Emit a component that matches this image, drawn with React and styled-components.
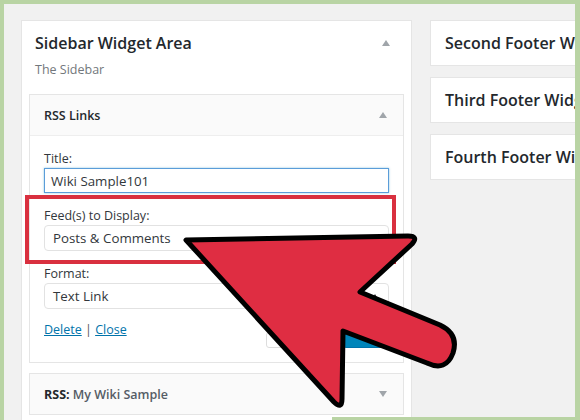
import React from 'react';
import styled, { createGlobalStyle } from 'styled-components';

const Global = createGlobalStyle`
  html, body { margin: 0; padding: 0; }
  body { font-family: "Open Sans", "Liberation Sans", sans-serif; color: #23282d; }
  * { box-sizing: border-box; }
`;

const Frame = styled.div`
  position: relative;
  width: 580px;
  height: 420px;
  padding: 4px 5px 0 4px;
  background: #b9d4a4;
  overflow: hidden;
`;

const Canvas = styled.div`
  display: flex;
  align-items: flex-start;
  gap: 18px;
  height: 100%;
  padding: 16px 0 0 17px;
  background: #f1f1f1;
  overflow: hidden;
`;

const Area = styled.div`
  flex: none;
  width: 391px;
  height: 420px;
  background: #fff;
  border: 1px solid #e5e5e5;
  padding: 0 7px;
`;

const AreaHead = styled.div`
  display: flex;
  align-items: center;
  justify-content: space-between;
  padding: 11px 14px 0 6px;
`;

const AreaTitle = styled.h2`
  margin: 0;
  font-size: 16px;
  line-height: 22px;
  font-weight: 600;
  color: #23282d;
`;

const AreaDesc = styled.div`
  margin: 7px 0 15px 6px;
  font-size: 12.5px;
  line-height: 18px;
  color: #72777c;
`;

const Toggle = styled.span`
  width: 0;
  height: 0;
  border-left: 4.5px solid transparent;
  border-right: 4.5px solid transparent;
  ${p => p.down
    ? 'border-top: 6px solid #a0a5aa;'
    : 'border-bottom: 6px solid #a0a5aa;'}
`;

const Widget = styled.div`
  border: 1px solid #e5e5e5;
  background: #fff;
  & + & { margin-top: 10px; }
`;

const WidgetHead = styled.div`
  display: flex;
  align-items: center;
  justify-content: space-between;
  height: ${p => p.tall ? 41 : 40}px;
  padding: 0 16px 0 14px;
  background: #fafafa;
  ${p => p.open && 'border-bottom: 1px solid #eee;'}
`;

const WidgetTitle = styled.div`
  font-size: 12.5px;
  font-weight: 600;
  color: #23282d;
  b { font-weight: 700; }
  span { color: #555d66; }
`;

const Body = styled.div`
  padding: 14px;
`;

const Field = styled.div`
  position: relative;
  & + & { margin-top: 14px; }
`;

const Label = styled.div`
  font-size: 12.5px;
  line-height: 18px;
  color: #32373c;
`;

const Input = styled.div`
  height: 25px;
  padding: 0 6px;
  display: flex;
  align-items: center;
  border: 1px solid #5b9dd9;
  box-shadow: 0 0 2px rgba(30, 140, 190, 0.5);
  font-size: 13.3px;
  color: #32373c;
`;

const Select = styled.div`
  position: relative;
  height: 26px;
  padding: 0 8px;
  display: flex;
  align-items: center;
  justify-content: space-between;
  border: 1px solid #e2e2e2;
  border-radius: 4px;
  font-size: 13.3px;
  color: #32373c;
`;

const Spin = styled.span`
  width: 0;
  height: 0;
  border-left: 3px solid transparent;
  border-right: 3px solid transparent;
  border-bottom: 5px solid #333;
  margin-right: 2px;
`;

const Highlight = styled.div`
  position: absolute;
  left: -19px;
  right: -7px;
  top: -12px;
  bottom: -13px;
  border: 4px solid #d9303f;
  pointer-events: none;
`;

const Actions = styled.div`
  display: flex;
  justify-content: space-between;
  align-items: flex-start;
  margin-top: 12px;
  height: 27px;
`;

const Links = styled.div`
  font-size: 12.5px;
  line-height: 18px;
  color: #555;
  a { color: #0073aa; text-decoration: underline; }
`;

const Buttons = styled.div`
  display: flex;
  gap: 4px;
  margin-top: 11px;
`;

const Button = styled.div`
  height: 16px;
  width: ${p => p.primary ? 46 : 73}px;
  border-radius: 3px;
  background: ${p => p.primary ? '#0085ba' : '#fff'};
  border: 1px solid ${p => p.primary ? '#0073aa' : '#ddd'};
`;

const Column = styled.div`
  display: flex;
  flex-direction: column;
  gap: 11px;
  flex: none;
`;

const Card = styled.div`
  width: 200px;
  height: 46px;
  display: flex;
  align-items: center;
  padding-left: 14px;
  background: #fff;
  border: 1px solid #e5e5e5;
  font-size: 16px;
  font-weight: 600;
  white-space: nowrap;
  color: #23282d;
`;

const EdgeStrip = styled.div`
  position: absolute;
  left: 332px;
  right: 0;
  bottom: 0;
  height: 3px;
  background: #b9d4a4;
`;

const Pointer = styled.svg`
  position: absolute;
  left: 0;
  top: 0;
  width: 580px;
  height: 420px;
  pointer-events: none;
`;

const footers = ['Second Footer Widget Area', 'Third Footer Widget Area', 'Fourth Footer Widget Area'];

export default function App() {
  return (
    <Frame>
      <Global />
      <Canvas>
        <Area>
          <AreaHead>
            <AreaTitle>Sidebar Widget Area</AreaTitle>
            <Toggle />
          </AreaHead>
          <AreaDesc>The Sidebar</AreaDesc>

          <Widget>
            <WidgetHead tall open>
              <WidgetTitle>RSS Links</WidgetTitle>
              <Toggle />
            </WidgetHead>
            <Body>
              <Field>
                <Label>Title:</Label>
                <Input>Wiki Sample101</Input>
              </Field>
              <Field>
                <Label>Feed(s) to Display:</Label>
                <Select>Posts &amp; Comments<Spin /></Select>
                <Highlight />
              </Field>
              <Field>
                <Label>Format:</Label>
                <Select>Text Link<Spin /></Select>
              </Field>
              <Actions>
                <Links><a>Delete</a> | <a>Close</a></Links>
                <Buttons>
                  <Button />
                  <Button primary />
                </Buttons>
              </Actions>
            </Body>
          </Widget>

          <Widget>
            <WidgetHead>
              <WidgetTitle><b>RSS:</b> <span>My Wiki Sample</span></WidgetTitle>
              <Toggle down />
            </WidgetHead>
          </Widget>
        </Area>

        <Column>
          {footers.map(f => <Card key={f}>{f}</Card>)}
        </Column>
      </Canvas>

      <EdgeStrip />

      <Pointer viewBox="0 0 580 420">
        <path
          d="M186 240 L408 236 Q419 236 412 244 L360 292 L440 325 Q459 334 453 353 Q446 372 427 363 L343 331 L342 399 Q342 410 334 402 Z"
          fill="#df2d42"
          stroke="#000"
          strokeWidth="5"
          strokeLinejoin="round"
        />
      </Pointer>
    </Frame>
  );
}
